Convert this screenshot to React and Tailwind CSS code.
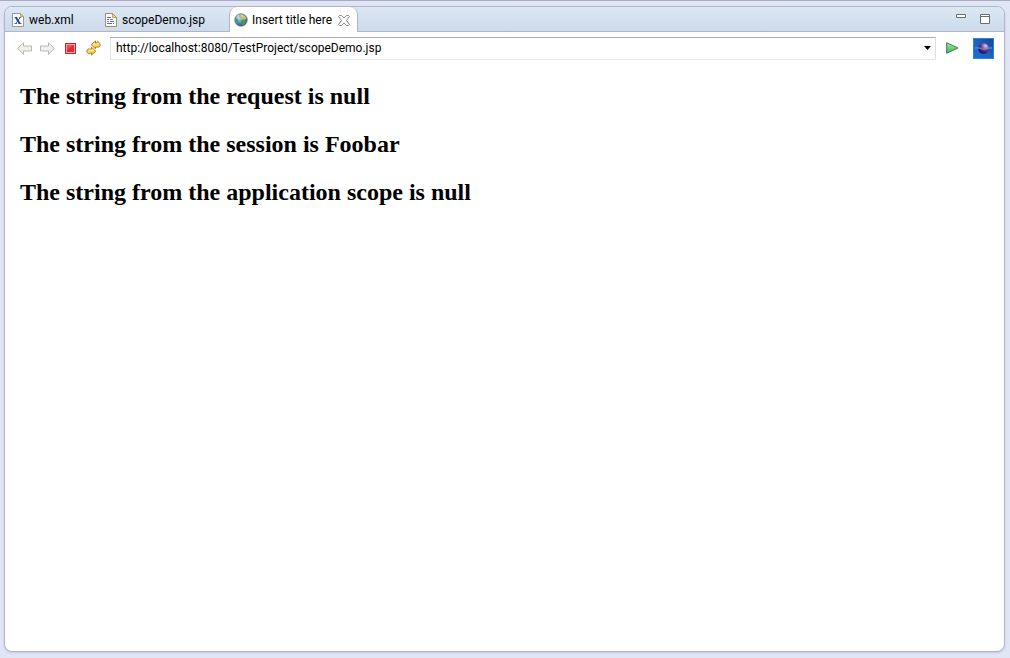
import React, { useState } from "react";

function XmlFileIcon() {
  return (
    <svg width="12" height="14" viewBox="0 0 12 14" aria-hidden="true">
      <path d="M.5.5h8l3 3v10H.5z" fill="#f8fbff" stroke="#a39a78" />
      <path d="M.5 13.5V.5h8" fill="none" stroke="#8b9bb5" />
      <path d="M8.5.5v3h3z" fill="#e6d394" stroke="#b59a50" strokeWidth=".8" />
      <path d="M2.500 4.500h2.500M7 4.500h2.200M2.500 10.500H5M6.500 10.500h3M8.200 4.500 3.800 10.500" stroke="#4c6c94" fill="none" />
      <path d="m3.800 4.300 4 6.400" stroke="#26456f" strokeWidth="1.900" />
    </svg>
  );
}

function JspFileIcon() {
  return (
    <svg width="12" height="14" viewBox="0 0 12 14" aria-hidden="true">
      <path d="M.5.5h7l4 4v9H.5z" fill="#fbfcff" stroke="#a48d52" />
      <path d="M.5 13.5V.5h7" fill="none" stroke="#9b946f" />
      <path d="M7.500.5v4h4z" fill="#ecd9a0" stroke="#b39148" strokeWidth=".8" />
      <path d="M2 4.500h4M2 6.500h2M5 8.500h4M2 10.500h5" stroke="#4c75ab" />
      <path d="M5 6.500h3M2 8.500h2" stroke="#c2606c" />
      <path d="M8 10.500h1" stroke="#58805c" />
    </svg>
  );
}

function GlobeIcon() {
  return (
    <svg width="14" height="14" viewBox="0 0 14 14" aria-hidden="true">
      <defs>
        <radialGradient id="sea" cx=".35" cy=".3" r=".75">
          <stop offset="0" stopColor="#c3e3fa" />
          <stop offset=".5" stopColor="#5796cf" />
          <stop offset="1" stopColor="#234d82" />
        </radialGradient>
      </defs>
      <circle cx="7" cy="7" r="6.200" fill="url(#sea)" stroke="#53718f" strokeWidth=".8" />
      <path d="m5 2 3-1 3 2 1.500 2-1.500 2-2-1-1.500 1L6 5 4.500 4z" fill="#b9bd70" />
      <path d="m8 7 3 .5 1 1.500-2 3-1.500.5L8 10 7 8.500z" fill="#5d913e" />
      <path d="m1.500 5 2 1 1 2-1 2.500L2 9z" fill="#5c9471" />
      <path d="m7 2 2 .5 1 2-2-.5z" fill="#eadca0" />
      <path d="m3 3 2-1-1 2z" fill="#eefaff" />
    </svg>
  );
}

function CloseIcon() {
  return (
    <svg width="12" height="11" viewBox="0 0 12 11" aria-hidden="true">
      <path d="M1.500.5h2L6 3 8.500.5h2l1 1-3 4 3 4-1 1h-2L6 8l-2.500 2.500h-2l-1-1 3-4-3-4z" fill="#fff" stroke="#747474" strokeWidth=".9" />
    </svg>
  );
}

function ArrowIcon({ forward }) {
  return (
    <svg width="15" height="13" viewBox="0 0 15 13" aria-hidden="true">
      <path
        d={forward ? "M14.300 6.500 8.500.7v3.300H.5v5h8v3.300z" : "M.7 6.500 6.500.7v3.300h8v5h-8v3.300z"}
        fill="#f0f0ec"
        stroke="#b9b9b4"
        strokeLinejoin="round"
      />
    </svg>
  );
}

function StopIcon() {
  return (
    <svg width="11" height="11" viewBox="0 0 11 11" aria-hidden="true">
      <rect x=".5" y=".5" width="10" height="10" fill="#f4a6a4" stroke="#b92731" />
      <rect x="2" y="2" width="7" height="7" fill="#e82633" />
      <path d="M2 2h7L2 7z" fill="#ef4d52" />
    </svg>
  );
}

function RefreshIcon() {
  return (
    <svg width="15" height="16" viewBox="0 0 15 16" aria-hidden="true">
      <g fill="#f9d564" stroke="#ad7510" strokeWidth=".9" strokeLinejoin="round">
        <path d="M5.200 4.700 9.500.9v2.300c1.300-.1 1.700-.6 2-1.700 2.200 1 3 2.500 2.600 4.300-.8 1.500-2.500 1.500-4.600 1.200v1.800z" />
        <path d="M9.800 11.300 5.500 15.100v-2.300c-1.300.1-2 .4-2.600 1.200C1.100 13 .5 11.700.9 10.200l1.900-1.500c.4.700 1.200.5 2.700.3V7.200z" />
      </g>
      <path d="M7 4.700 8.700 3v1.300c2 0 3-.5 3.500-1.300M3 10.200c.8.500 2 .5 3.500.2V9.300L8 10.700" fill="none" stroke="#fff0a8" strokeWidth=".8" />
    </svg>
  );
}

function GoIcon() {
  return (
    <svg width="13" height="12" viewBox="0 0 13 12" aria-hidden="true">
      <defs>
        <linearGradient id="go" x2="0" y2="1">
          <stop stopColor="#b5e39f" />
          <stop offset="1" stopColor="#45ae5c" />
        </linearGradient>
      </defs>
      <path d="M.7.7 12 6 .7 11.300z" fill="url(#go)" stroke="#2b8850" strokeLinejoin="round" />
    </svg>
  );
}

function PlanetLogo() {
  return (
    <svg width="21" height="21" viewBox="0 0 21 21" aria-hidden="true">
      <defs>
        <linearGradient id="sky" x1="0" y1="1" x2="1" y2="0">
          <stop stopColor="#1b6fd4" />
          <stop offset=".5" stopColor="#2060c0" />
          <stop offset="1" stopColor="#174493" />
        </linearGradient>
        <radialGradient id="planet" cx=".7" cy=".25" r=".75">
          <stop stopColor="#e2cdf0" />
          <stop offset=".3" stopColor="#9b7ac0" />
          <stop offset=".65" stopColor="#4a347f" />
          <stop offset="1" stopColor="#211653" />
        </radialGradient>
      </defs>
      <rect x=".5" y=".5" width="20" height="20" fill="url(#sky)" stroke="#2387e2" />
      <circle cx="10.500" cy="10.500" r="5.300" fill="url(#planet)" />
      <path d="M2 10h5.500M14 10h5" stroke="#8f97e4" strokeWidth=".9" />
      <path d="M7 10.200c2 1.300 5 1.300 7.500 0" fill="none" stroke="#a78fd0" strokeWidth=".8" />
    </svg>
  );
}

function FileTab({ label, icon, className }) {
  return (
    <button
      type="button"
      role="tab"
      aria-selected="false"
      className={"flex h-full items-center gap-[5px] border-b border-[#b0b6c6] pt-px pl-[7px] " + className}
    >
      {icon}
      <span>{label}</span>
    </button>
  );
}

export default function App() {
  const [url, setUrl] = useState("http://localhost:8080/TestProject/scopeDemo.jsp");

  return (
    <div className="flex min-h-screen flex-col border-t border-[#a9abc0] bg-[#e1e6f6] pt-[5px] pr-[5px] pb-1.5 pl-1 font-[Roboto,sans-serif] text-xs text-black">
      <div className="flex grow flex-col overflow-hidden rounded-lg border border-[#b0b6c6] bg-white shadow-sm">
        <header className="flex h-[25px] shrink-0 bg-linear-to-b from-[#dce7f3] to-[#cbdaea]">
          <div role="tablist" className="flex h-full">
            <FileTab label="web.xml" icon={<XmlFileIcon />} className="w-[93px]" />
            <FileTab label="scopeDemo.jsp" icon={<JspFileIcon />} className="w-[131px]" />
            <div className="flex h-full w-[129px] items-center justify-between rounded-t-lg border-x border-[#b0b6c6] bg-white pt-px pr-[7px] pl-1">
              <button type="button" role="tab" aria-selected="true" className="flex h-full items-center gap-1">
                <GlobeIcon />
                <span className="whitespace-nowrap">Insert title here</span>
              </button>
              <button type="button" aria-label="Close tab">
                <CloseIcon />
              </button>
            </div>
          </div>
          <div className="flex grow items-start justify-end gap-3.5 border-b border-[#b0b6c6] pt-[7px] pr-3.5">
            <button type="button" aria-label="Minimize">
              <svg width="10" height="4" viewBox="0 0 10 4" aria-hidden="true">
                <path d="M.5.5h9v3h-9z" fill="#fff" stroke="#6c6c6c" />
              </svg>
            </button>
            <button type="button" aria-label="Maximize">
              <svg width="10" height="10" viewBox="0 0 10 10" aria-hidden="true">
                <path d="M.5.5h9v9h-9zM0 2.500h10" fill="#fff" stroke="#6c6c6c" />
              </svg>
            </button>
          </div>
        </header>

        <nav aria-label="Browser" className="flex h-8 shrink-0 items-center pr-2.5 pl-3">
          <div className="flex items-center gap-2">
            <button type="button" aria-label="Back"><ArrowIcon /></button>
            <button type="button" aria-label="Forward"><ArrowIcon forward /></button>
            <button type="button" aria-label="Stop" className="px-0.5"><StopIcon /></button>
            <button type="button" aria-label="Refresh"><RefreshIcon /></button>
          </div>
          <div className="ml-[9px] flex h-[23px] min-w-0 grow items-center border border-t-[#abadb3] border-r-[#dbdfe6] border-b-[#e3e9ef] border-l-[#e2e3ea] bg-white">
            <input
              type="text"
              aria-label="Address"
              value={url}
              onChange={(e) => setUrl(e.target.value)}
              className="h-full min-w-0 grow px-[5px] outline-none"
            />
            <button type="button" aria-label="Address history" className="pr-1">
              <svg width="7" height="4" viewBox="0 0 7 4" aria-hidden="true">
                <path d="M0 0h7L3.500 4z" />
              </svg>
            </button>
          </div>
          <button type="button" aria-label="Go" className="ml-2.5"><GoIcon /></button>
          <div className="ml-3.5"><PlanetLogo /></div>
        </nav>

        <main className="flex flex-col gap-5 px-[15px] pt-[18px] font-['Liberation_Serif',serif] text-2xl leading-7 font-bold">
          <h2>The string from the request is null</h2>
          <h2>The string from the session is Foobar</h2>
          <h2>The string from the application scope is null</h2>
        </main>
      </div>
    </div>
  );
}
